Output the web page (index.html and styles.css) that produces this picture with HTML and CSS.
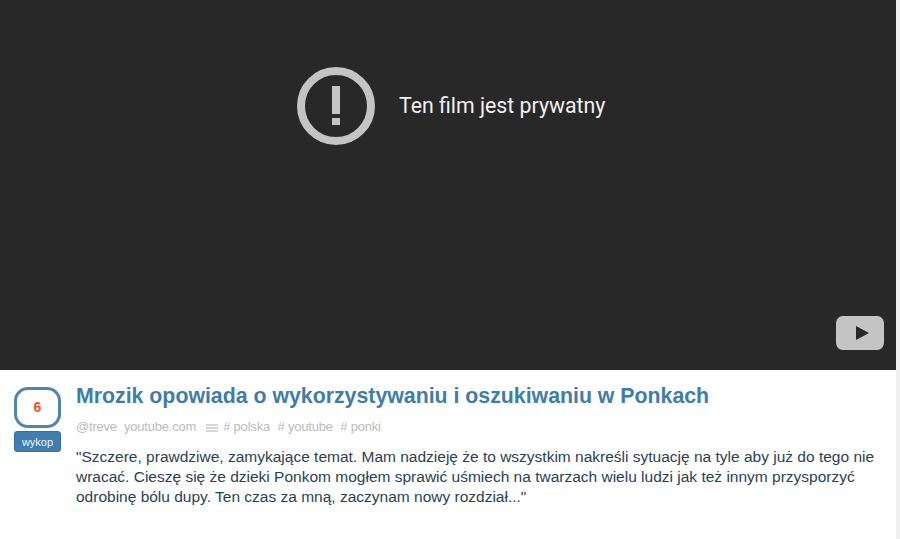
FILE: index.html
```html
<!DOCTYPE html>
<html lang="pl">

<head>
    <meta charset="UTF-8">
    <title>Mrozik opowiada o wykorzystywaniu i oszukiwaniu w Ponkach</title>
    <link rel="stylesheet" href="styles.css">
</head>

<body>
    <div class="container">
        <div class="player">
            <div class="error">
                <svg class="error-icon" width="78" height="78" viewBox="0 0 78 78">
                    <circle cx="39" cy="39" r="35" fill="none" stroke="#c4c4c4" stroke-width="8" />
                    <rect x="35" y="19" width="8" height="28" fill="#c4c4c4" />
                    <rect x="35" y="51" width="8" height="7" fill="#c4c4c4" />
                </svg>
                <span class="error-text">Ten film jest prywatny</span>
            </div>
            <svg class="yt-logo" width="48" height="34" viewBox="0 0 48 34">
                <path d="M7 0H41C45 0 48 3 48 8V26C48 31 45 34 41 34H7C3 34 0 31 0 26V8C0 3 3 0 7 0Z" fill="#c4c4c4" />
                <path d="M20 10L33 17L20 24Z" fill="#282828" />
            </svg>
        </div>

        <div class="entry">
            <div class="vote">
                <div class="vote-count">6</div>
                <a class="vote-button" href="#">wykop</a>
            </div>
            <div class="entry-body">
                <h2 class="entry-title"><a href="#">Mrozik opowiada o wykorzystywaniu i oszukiwaniu w Ponkach</a></h2>
                <div class="entry-meta">
                    <span>@treve</span>
                    <span>youtube.com</span>
                    <svg class="tags-icon" width="12" height="8" viewBox="0 0 12 8">
                        <path d="M0 1H12M0 4H12M0 7H12" stroke="#c8c8c8" stroke-width="1.4" />
                    </svg>
                    <span class="tag"># polska</span>
                    <span class="tag"># youtube</span>
                    <span class="tag"># ponki</span>
                </div>
                <p class="entry-text">"Szczere, prawdziwe, zamykające temat. Mam nadzieję że to wszystkim nakreśli sytuację na tyle aby już do tego nie wracać. Cieszę się że dzieki Ponkom mogłem sprawić uśmiech na twarzach wielu ludzi jak też innym przysporzyć odrobinę bólu dupy. Ten czas za mną, zaczynam nowy rozdział..."</p>
            </div>
        </div>
    </div>
</body>

</html>
```

FILE: styles.css
```css
html,
body {
    height: 100%;
}

body {
    font-family: "Liberation Sans", Arial, sans-serif;
    background-color: #f0f0f0;
    margin: 0;
    padding: 0;
    overflow: hidden;
}

.container {
    width: 896px;
    height: 539px;
    background-color: #fff;
}

.player {
    position: relative;
    height: 370px;
    background-color: #282828;
}

.error {
    display: flex;
    align-items: center;
    padding: 67px 0 0 297px;
}

.error-text {
    margin: 0 0 2px 24px;
    font-family: Roboto, sans-serif;
    font-size: 21.3px;
    color: #f0f0f0;
}

.yt-logo {
    position: absolute;
    right: 12px;
    bottom: 20px;
}

.entry {
    display: flex;
    padding: 14px 14px 0 14px;
}

.vote {
    width: 48px;
    flex-shrink: 0;
    padding-top: 3px;
}

.vote-count {
    box-sizing: border-box;
    width: 47px;
    height: 41px;
    border: 3px solid #4f86ae;
    border-radius: 14px;
    text-align: center;
    font-size: 14px;
    font-weight: bold;
    line-height: 34px;
    color: #f4511e;
}

.vote-button {
    display: block;
    box-sizing: border-box;
    width: 47px;
    height: 21px;
    margin-top: 3px;
    background-color: #3f7fb0;
    border: 1px solid #39709b;
    border-radius: 3px;
    text-align: center;
    font-size: 11px;
    line-height: 20px;
    color: #f2f2f2;
    text-decoration: none;
}

.entry-body {
    margin-left: 14px;
    flex: 1;
}

.entry-title {
    margin: 0;
    font-size: 21.3px;
    line-height: 24px;
    font-weight: bold;
}

.entry-title a {
    color: #3e7cab;
    text-decoration: none;
}

.entry-meta {
    display: flex;
    align-items: center;
    margin-top: 11px;
    font-size: 13px;
    line-height: 16px;
    letter-spacing: -0.2px;
    color: #bbb;
}

.entry-meta span {
    margin-right: 7px;
}

.entry-meta .tag {
    margin-right: 7.5px;
}

.tags-icon {
    margin: 1px 5px 0 3px;
}

.entry-text {
    margin: 12px 0 0;
    font-size: 15.5px;
    line-height: 20px;
    color: #2a3f55;
}
```
